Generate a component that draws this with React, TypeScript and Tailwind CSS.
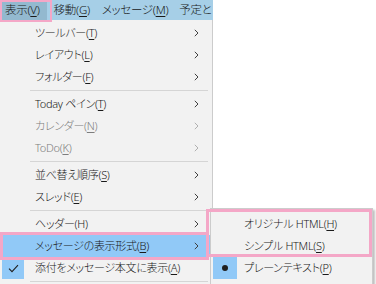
import React from 'react';

type Item =
  | { sep: true }
  | {
      sep?: false;
      label: string;
      k: string;
      arrow?: boolean;
      disabled?: boolean;
      active?: boolean;
      checked?: boolean;
      plain?: boolean;
    };

const items: Item[] = [
  { label: 'ツールバー', k: 'T', arrow: true },
  { label: 'レイアウト', k: 'L', arrow: true },
  { label: 'フォルダー', k: 'F', arrow: true },
  { sep: true },
  { label: 'Today ペイン', k: 'T', arrow: true },
  { label: 'カレンダー', k: 'N', arrow: true, disabled: true },
  { label: 'ToDo', k: 'K', arrow: true, disabled: true },
  { sep: true },
  { label: '並べ替え順序', k: 'S', arrow: true },
  { label: 'スレッド', k: 'E', arrow: true },
  { sep: true },
  { label: 'ヘッダー', k: 'H', arrow: true, plain: true },
  { label: 'メッセージの表示形式', k: 'B', arrow: true, active: true },
  { label: '添付をメッセージ本文に表示', k: 'A', checked: true },
  { sep: true },
];

function Label({ text, k, plain }: { text: string; k: string; plain?: boolean }) {
  return (
    <span className="whitespace-nowrap">
      {text}(<span className={plain ? '' : 'underline underline-offset-2'}>{k}</span>)
    </span>
  );
}

function Chevron({ dim }: { dim?: boolean }) {
  return (
    <svg width="5" height="8" viewBox="0 0 5 8" className="shrink-0">
      <path d="M0.8 0.8 L4 4 L0.8 7.2" fill="none" stroke={dim ? '#b0b0b0' : '#404040'} strokeWidth="1" />
    </svg>
  );
}

function Check() {
  return (
    <svg width="11" height="9" viewBox="0 0 11 9">
      <path d="M1 4.6 L4 7.6 L10 1.2" fill="none" stroke="#1f1f1f" strokeWidth="1.1" />
    </svg>
  );
}

export default function App() {
  return (
    <div className="relative h-[284px] w-[376px] overflow-hidden bg-white text-[11px] font-light tracking-[-0.3px] text-[#1a1a1a] font-['Noto_Sans','Noto_Sans_CJK_JP',sans-serif] [font-feature-settings:'palt']">
      {/* menubar */}
      <div className="flex h-[20px] w-[213px] items-center overflow-hidden whitespace-nowrap bg-[#a6cfe7] text-[11.5px] leading-[20px]">
        <div className="h-full bg-[#93b9cf] pl-[5px] pr-[7px]">
          表示(<span className="underline underline-offset-2">V</span>)
        </div>
        <div className="pl-[7px] pr-[6px]">
          移動(<span className="underline underline-offset-2">G</span>)
        </div>
        <div className="pl-[6px] pr-[6px]">
          メッセージ(<span className="underline underline-offset-2">M</span>)
        </div>
        <div className="pl-[5px]">予定と</div>
      </div>

      {/* main menu */}
      <div className="h-[264px] w-[213px] border-r border-[#cccccc] bg-[#f2f2f2] pt-[2px]">
        {items.map((it, i) =>
          it.sep ? (
            <div key={i} className="flex h-[5px] items-center pl-[30px] pr-[4px]">
              <div className="h-px w-full bg-[#d5d5d5]" />
            </div>
          ) : (
            <div
              key={i}
              className={`mx-[2px] flex h-[22px] items-center pr-[11px] ${it.active ? 'bg-[#91c9f7]' : ''} ${
                it.disabled ? 'text-[#7d7d7d]' : ''
              }`}
            >
              <div className={`flex h-full w-[22px] shrink-0 items-center justify-center ${it.checked ? 'bg-[#91c9f7]' : ''}`}>
                {it.checked && <Check />}
              </div>
              <div className="flex-1 pl-[11px]">
                <Label text={it.label} k={it.k} plain={it.plain} />
              </div>
              {it.arrow && <Chevron dim={it.disabled} />}
            </div>
          ),
        )}
      </div>

      {/* submenu */}
      <div className="absolute left-[210px] top-[208px] h-[90px] w-[163px] border border-[#cccccc] bg-[#f2f2f2] pt-[4px] shadow-[2px_2px_2px_rgba(0,0,0,0.25)]">
        {[
          { label: 'オリジナル HTML', k: 'H' },
          { label: 'シンプル HTML', k: 'S' },
          { label: 'プレーンテキスト', k: 'P', on: true },
        ].map((s, i) => (
          <div key={i} className="mx-[2px] flex h-[22px] items-center">
            <div className={`flex h-full w-[24px] shrink-0 items-center justify-center ${s.on ? 'bg-[#91c9f7]' : ''}`}>
              {s.on && <div className="h-[6px] w-[6px] rounded-full bg-[#1f1f1f]" />}
            </div>
            <div className="pl-[7px]">
              <Label text={s.label} k={s.k} />
            </div>
          </div>
        ))}
      </div>

      {/* pink callouts */}
      <div className="pointer-events-none absolute left-0 top-0 h-[22px] w-[52px] border-2 border-[#f4a7c7]" />
      <div className="pointer-events-none absolute left-0 top-[232px] h-[28px] w-[209px] border-[3px] border-[#f4a7c7]" />
      <div className="pointer-events-none absolute left-[206px] top-[209px] h-[48px] w-[166px] border-[3px] border-[#f4a7c7]" />
    </div>
  );
}
